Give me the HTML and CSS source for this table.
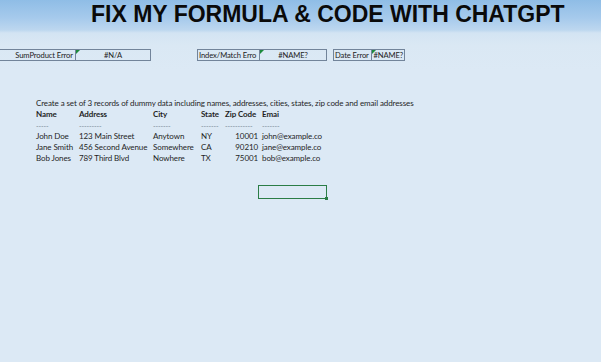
FILE: index.html
```html
<!DOCTYPE html>
<html>
<head>
<meta charset="utf-8">
<link rel="stylesheet" href="styles.css">
</head>
<body>
<div class="sheet">
  <header class="banner">
    <h1 class="title">FIX MY FORMULA &amp; CODE WITH CHATGPT</h1>
  </header>
  <div class="errors">
    <div class="pair pair1">
      <span class="lbl">SumProduct Error</span>
      <span class="val">#N/A</span>
    </div>
    <div class="pair pair2">
      <span class="lbl">Index/Match Erro</span>
      <span class="val">#NAME?</span>
    </div>
    <div class="pair pair3">
      <span class="lbl">Date Error</span>
      <span class="val">#NAME?</span>
    </div>
  </div>
  <div class="prompt">Create a set of 3 records of dummy data including names, addresses, cities, states, zip code and email addresses</div>
  <div class="table">
    <span class="h">Name</span><span class="h">Address</span><span class="h">City</span><span class="h">State</span><span class="h">Zip Code</span><span class="h">Emai</span>
    <span class="d">-----</span><span class="d">---------</span><span class="d">-------</span><span class="d">-------</span><span class="d">-----------</span><span class="d">-------</span>
    <span>John Doe</span><span>123 Main Street</span><span>Anytown</span><span>NY</span><span class="num">10001</span><span>john@example.co</span>
    <span>Jane Smith</span><span>456 Second Avenue</span><span>Somewhere</span><span>CA</span><span class="num">90210</span><span>jane@example.co</span>
    <span>Bob Jones</span><span>789 Third Blvd</span><span>Nowhere</span><span>TX</span><span class="num">75001</span><span>bob@example.co</span>
  </div>
  <div class="selwrap"><div class="selected"></div></div>
</div>
</body>
</html>
```
FILE: styles.css
```css
html, body {
  margin: 0;
  padding: 0;
}
body {
  width: 601px;
  height: 362px;
  overflow: hidden;
  background: #dce9f5;
  font-family: Lato, "Liberation Sans", sans-serif;
  color: #1f1f1f;
}
.sheet {
  height: 362px;
  background: linear-gradient(to bottom, #8fbde6 0px, #a6caec 18px, #bdd7ef 30px, #d3e4f3 33px, #dae8f4 45px, #dce9f5 70px);
}
.banner {
  height: 33px;
  padding-left: 91px;
  box-sizing: border-box;
}
.title {
  margin: 0;
  padding-top: 1px;
  font-family: "Liberation Sans", Arial, sans-serif;
  font-weight: bold;
  font-size: 23px;
  line-height: 26px;
  color: #0a0a0a;
}
.errors {
  display: flex;
  margin-top: 16px;
  height: 12px;
}
.pair {
  display: flex;
  height: 12px;
  font-size: 7.6px;
  line-height: 10px;
  letter-spacing: -0.1px;
  color: #222;
}
.lbl, .val {
  border: 1px solid #72849a;
  box-sizing: border-box;
  height: 12px;
  white-space: nowrap;
}
.val {
  position: relative;
  border-left: none;
  text-align: center;
}
.val::before {
  content: "";
  position: absolute;
  left: 0;
  top: 0;
  border-top: 4px solid #1c8a3c;
  border-right: 4px solid transparent;
}
.pair1 .lbl { width: 76px; text-align: right; padding-right: 2px; border-left: none; }
.pair1 .val { width: 75px; }
.pair2 { margin-left: 46px; }
.pair2 .lbl { width: 63px; padding-left: 1px; }
.pair2 .val { width: 67px; }
.pair3 { margin-left: 6px; }
.pair3 .lbl { width: 39px; padding-left: 1px; }
.pair3 .val { width: 33px; text-align: right; padding-right: 1px; }
.prompt {
  margin: 37px 0 0 36px;
  font-size: 8px;
  letter-spacing: -0.1px;
  line-height: 11px;
  color: #1f1f1f;
  white-space: nowrap;
}
.table {
  margin-left: 36px;
  display: grid;
  grid-template-columns: 43px 74px 48px 24px 37px 80px;
  grid-auto-rows: 11px;
  font-size: 8px;
  letter-spacing: -0.1px;
  line-height: 11px;
  white-space: nowrap;
}
.h { font-weight: bold; }
.d { color: #7a8898; font-size: 7px; line-height: 13px; }
.num { text-align: right; padding-right: 4px; }
.selwrap {
  margin: 21px 0 0 258px;
}
.selected {
  position: relative;
  width: 69px;
  height: 14px;
  box-sizing: border-box;
  border: 1px solid #2a7d46;
}
.selected::after {
  content: "";
  position: absolute;
  right: -2px;
  bottom: -2px;
  width: 3px;
  height: 3px;
  background: #2a7d46;
}
```
